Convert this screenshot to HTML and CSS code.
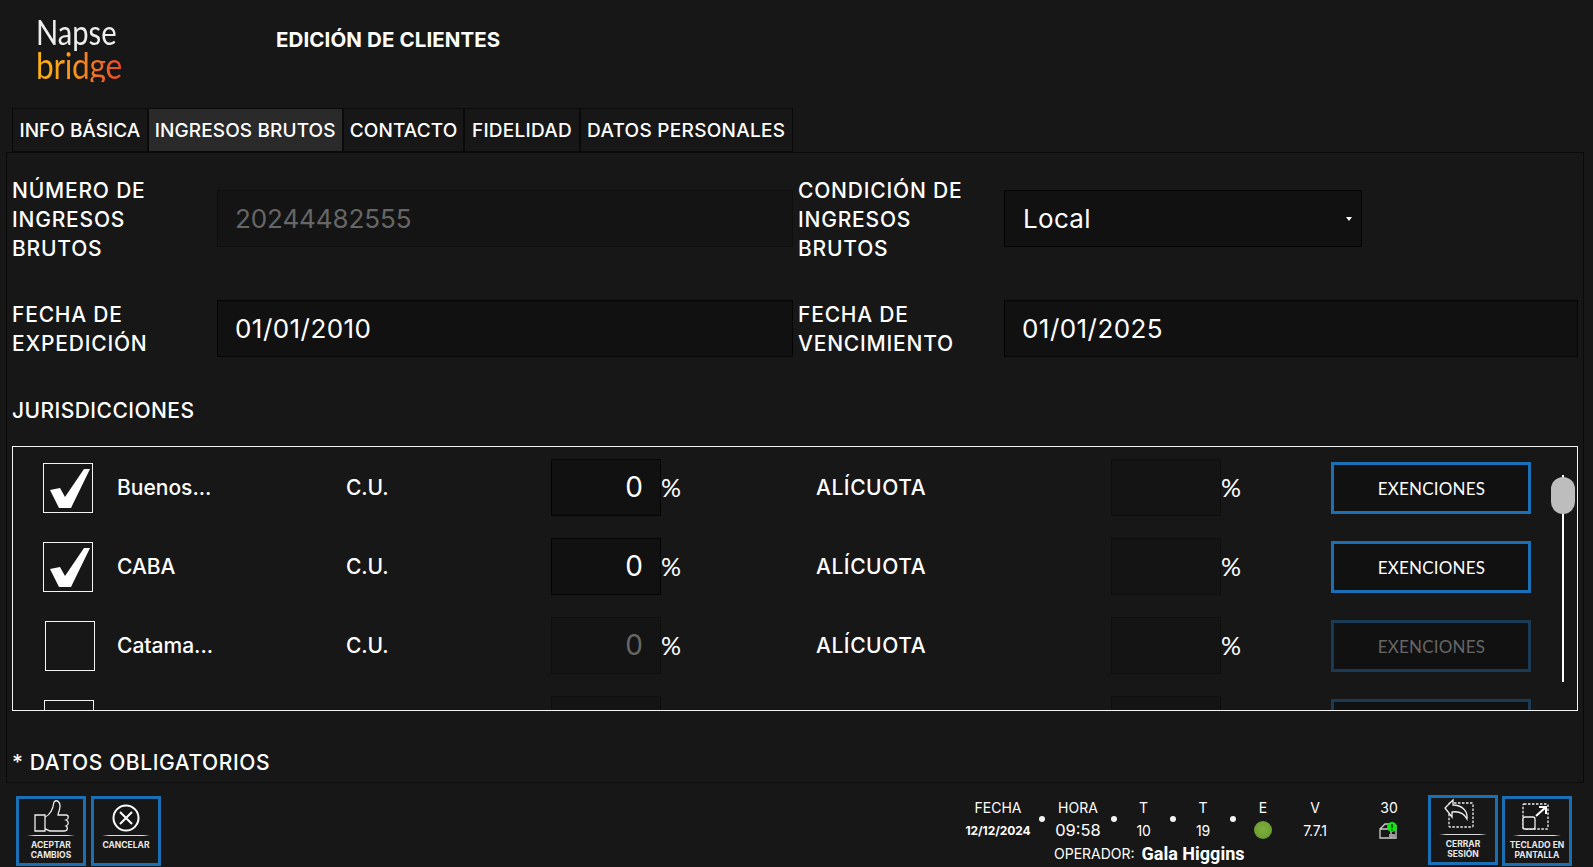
FILE: index.html
```html
<!DOCTYPE html>
<html lang="es">
<head>
<meta charset="utf-8">
<title>Edición de clientes</title>
<link rel="stylesheet" href="styles.css">
</head>
<body>
<header class="top">
  <div class="logo"><span class="logo-a">Napse</span><span class="logo-b">bridge</span></div>
  <h1 class="title">EDICIÓN DE CLIENTES</h1>
</header>
<nav class="tabs">
  <div class="tab tab-first">INFO BÁSICA</div>
  <div class="tab tab-on">INGRESOS BRUTOS</div>
  <div class="tab">CONTACTO</div>
  <div class="tab tab-wide">FIDELIDAD</div>
  <div class="tab tab-wide">DATOS PERSONALES</div>
</nav>
<main class="panel">
  <section class="form">
    <div class="lab">NÚMERO DE INGRESOS BRUTOS</div>
    <div class="field field-off">20244482555</div>
    <div class="lab lab-r">CONDICIÓN DE INGRESOS BRUTOS</div>
    <div class="field select">Local</div>
    <div class="lab">FECHA DE EXPEDICIÓN</div>
    <div class="field field-date">01/01/2010</div>
    <div class="lab lab-r">FECHA DE VENCIMIENTO</div>
    <div class="field field-date">01/01/2025</div>
  </section>
  <h2 class="head">JURISDICCIONES</h2>
  <section class="list">
    <div class="row">
      <div class="check"><svg viewBox="0 0 48 48" class="tick"><path d="M6 26 L16 24 L21 33 L40 5 L46 5 L27 44 L15 44 Z"/></svg></div>
      <div class="name">Buenos...</div><div class="cu">C.U.</div>
      <div class="num">0</div><div class="pct">%</div>
      <div class="cu alic">ALÍCUOTA</div><div class="num num-off"></div><div class="pct">%</div>
      <div class="btn">EXENCIONES</div>
    </div>
    <div class="row">
      <div class="check"><svg viewBox="0 0 48 48" class="tick"><path d="M6 26 L16 24 L21 33 L40 5 L46 5 L27 44 L15 44 Z"/></svg></div>
      <div class="name">CABA</div><div class="cu">C.U.</div>
      <div class="num">0</div><div class="pct">%</div>
      <div class="cu alic">ALÍCUOTA</div><div class="num num-off"></div><div class="pct">%</div>
      <div class="btn">EXENCIONES</div>
    </div>
    <div class="row">
      <div class="check check-2"></div>
      <div class="name">Catama...</div><div class="cu">C.U.</div>
      <div class="num num-off">0</div><div class="pct">%</div>
      <div class="cu alic">ALÍCUOTA</div><div class="num num-off"></div><div class="pct">%</div>
      <div class="btn btn-off">EXENCIONES</div>
    </div>
    <div class="row">
      <div class="check check-1"></div>
      <div class="name"></div><div class="cu"></div>
      <div class="num num-off"></div><div class="pct"></div>
      <div class="cu"></div><div class="num num-off"></div><div class="pct"></div>
      <div class="btn btn-off"></div>
    </div>
    <div class="track"><div class="thumb"></div></div>
  </section>
  <div class="head head-req">* DATOS OBLIGATORIOS</div>
</main>
<footer class="foot">
  <div class="fbtn">
    <svg class="ico" viewBox="0 0 64 36"><path d="M16 16H26V32H16Z"/><path d="M26 18C31 16 34 10 35 3C38 0 41 3 41 7C41 11 39 14 39 16H47C50 16 50 20 47 21C50 22 50 26 47 27C49 28 49 32 45 32H32C29 32 28 30 26 30"/></svg>
    <div class="rule"></div>
    <div class="flabel">ACEPTAR CAMBIOS</div>
  </div>
  <div class="fbtn">
    <svg class="ico" viewBox="0 0 64 36"><circle cx="32" cy="19" r="12.5" class="thick"/><path d="M26 13L38 25M38 13L26 25" class="thick"/></svg>
    <div class="rule"></div>
    <div class="flabel">CANCELAR</div>
  </div>
  <div class="status">
    <div class="stats">
      <div class="stat s-fecha"><span>FECHA</span><b>12/12/2024</b></div><i class="dot"></i>
      <div class="stat s-hora"><span>HORA</span><em>09:58</em></div><i class="dot"></i>
      <div class="stat s-t1"><span>T</span><small>10</small></div><i class="dot"></i>
      <div class="stat s-t2"><span>T</span><small>19</small></div><i class="dot"></i>
      <div class="stat s-e"><span>E</span><div class="led"></div></div>
      <div class="stat s-v"><span>V</span><small>7.7.1</small></div>
      <div class="stat s-n"><span>30</span>
        <svg class="box" viewBox="0 0 20 18"><path d="M1 8L6 3H13M1 8H12V17H1ZM12 8L17 5V17H12" class="box-l"/><path d="M10 13H16V16H10Z" class="box-f"/><circle cx="13" cy="6" r="5" class="box-g"/><path d="M13 3V7M13 8V9.4" class="box-m"/></svg>
      </div>
    </div>
    <div class="oper"><span>OPERADOR:</span><strong>Gala Higgins</strong></div>
  </div>
  <div class="fbtn fbtn-r">
    <svg class="ico" viewBox="0 0 64 36"><rect x="18" y="5" width="24" height="24" rx="1" class="dash"/><path class="fillbg" d="M22 2L14 10L21 19V14C28 13 33 15 36 21C37 13 31 7 22 7Z"/></svg>
    <div class="rule"></div>
    <div class="flabel">CERRAR SESIÓN</div>
  </div>
  <div class="fbtn">
    <svg class="ico" viewBox="0 0 64 36"><rect x="18" y="5" width="25" height="25" rx="1" class="dash"/><rect x="18" y="18" width="12" height="12" rx="2" class="fillbg"/><path d="M31 17L41 8M34 8H41V15" class="thick"/></svg>
    <div class="rule"></div>
    <div class="flabel">TECLADO EN PANTALLA</div>
  </div>
</footer>
</body>
</html>
```
FILE: styles.css
```css
* { box-sizing: border-box; }
html, body { margin: 0; height: 867px; overflow: hidden; }
body {
  background: #171717;
  color: #fff;
  font-family: Inter, "Open Sans", sans-serif;
  display: flex;
  flex-direction: column;
}
.top { height: 108px; display: flex; align-items: flex-start; }
.logo { width: 276px; padding: 18px 0 0 36px; display: flex; flex-direction: column; align-items: flex-start; }
.logo-a { font: 400 30px/30px Lato, sans-serif; color: #eee; transform: scale(.97, 1.14); transform-origin: left bottom; }
.logo-b {
  font: 400 33px/32px Lato, sans-serif;
  letter-spacing: -.3px;
  background: linear-gradient(90deg, #fdb414 0%, #f79421 45%, #e84a27 100%);
  -webkit-background-clip: text;
  background-clip: text;
  color: transparent;
  transform: scale(.96, 1.14);
  transform-origin: left center;
}
.title { margin: 26px 0 0; font-size: 20.5px; line-height: 28px; font-weight: 700; letter-spacing: .1px; }

.tabs { margin-left: 12px; height: 44px; display: flex; }
.tab {
  display: flex; align-items: center; justify-content: center;
  padding: 0 6px; height: 44px;
  border: 1px solid #0a0a0a;
  font-size: 19px; font-weight: 500; letter-spacing: .12px;
}
.tab-first { letter-spacing: 0; padding: 0 6.5px; }
.tab-wide { letter-spacing: .28px; padding: 0 6.5px; }
.tab-on { background: #2a2a2a; }

.panel {
  margin-left: 6px; width: 1578px; height: 631px;
  border: 1px solid #0a0a0a;
  padding: 22px 5px 0 5px;
}
.form {
  display: grid;
  grid-template-columns: 205px 576px 211px 574px;
  grid-template-rows: 87px 58px;
  row-gap: 37px;
  align-items: center;
}
.lab { font-size: 21px; line-height: 29px; font-weight: 500; width: 190px; letter-spacing: .8px; padding-top: 2px; }
.lab-r { margin-left: 5px; }
.field {
  height: 57px; background: #111; border: 1px solid #040404;
  display: flex; align-items: center; padding-left: 17px;
  font-size: 26px; font-weight: 400;
}
.field-off { background: #141414; border-color: #0e0e0e; color: #666; letter-spacing: -.1px; }
.field-date { letter-spacing: .45px; }
.select { width: 358px; padding-left: 18px; position: relative; letter-spacing: .3px; }
.select::after {
  content: ""; position: absolute; right: 9px; top: 26px;
  border: 3.5px solid transparent; border-top: 4px solid #fff; border-bottom: 0;
}

.head { margin: 39px 0 0; font-size: 21px; line-height: 29px; font-weight: 500; letter-spacing: .45px; }
.head-req { margin-top: 37px; letter-spacing: .6px; }

.list {
  margin-top: 21px; width: 1566px; height: 265px;
  border: 1px solid #f4f4f4;
  overflow: hidden; position: relative;
}
.row {
  height: 79px;
  display: grid;
  grid-template-columns: 74px 229px 205px 110px 155px 295px 110px 110px 200px;
  align-items: center;
  padding-left: 30px;
  font-size: 21px;
  font-weight: 500;
}
.check { width: 50px; height: 50px; border: 1px solid #f4f4f4; margin-top: 3px; }
.check-2 { margin-left: 2px; }
.check-1 { margin-left: 1px; }
.tick { display: block; width: 48px; height: 48px; }
.tick path { fill: #fff; }
.name, .cu { padding-top: 2px; }
.cu { letter-spacing: -.1px; }
.alic { letter-spacing: .55px; }
.num {
  height: 57px; background: #111; border: 1px solid #040404;
  display: flex; align-items: center; justify-content: flex-end;
  padding-right: 17px; font-size: 28px; font-weight: 400;
  margin-top: 1px;
}
.num-off { background: #141414; border-color: #0e0e0e; color: #666; }
.pct { font-family: Lato, sans-serif; font-size: 25px; font-weight: 400; }
.btn {
  height: 52px; background: #111; border: 3px solid #1a6fb5;
  display: flex; align-items: center; justify-content: center;
  font: 400 17px Lato, sans-serif; letter-spacing: .2px;
  margin-top: 3px; padding-left: 1px;
}
.btn-off { border-color: #1a3a55; color: #666; }
.track { position: absolute; left: 1549px; top: 28px; width: 2px; height: 207px; background: #fff; }
.thumb {
  position: absolute; left: -11px; top: 2px; width: 24px; height: 37px;
  border-radius: 12px; background: #bdbdbd;
}

.foot { flex: 1; display: flex; align-items: flex-start; padding: 13px 21px 0 16px; gap: 5px; }
.fbtn {
  width: 70px; height: 70px; border: 3px solid #1a6fb5; flex: none;
  display: flex; flex-direction: column; align-items: center;
}
.fbtn-r { margin-top: -1px; margin-right: -1px; }
.ico { display: block; width: 64px; height: 36px; flex: none; }
.ico path, .ico circle, .ico rect { fill: none; stroke: #eee; stroke-width: 1.3; }
.ico .thick { stroke-width: 2; stroke: #fff; }
.ico .dash { stroke-dasharray: 2.5 1.5; }
.ico .fillbg { fill: #171717; }
.rule { width: 48px; height: 1px; background: linear-gradient(90deg, transparent, #ddd 15%, #ddd 85%, transparent); flex: none; }
.flabel { margin-top: 4px; width: 64px; text-align: center; font-size: 8.5px; line-height: 10px; font-weight: 700; color: #e8e8e8; }

.status { margin-left: auto; margin-right: 9px; width: 457px; }
.stats { display: flex; height: 46px; }
.stat { display: flex; flex-direction: column; align-items: center; font-size: 14px; font-weight: 400; flex: none; }
.stat span { line-height: 23px; height: 23px; }
.stat b { line-height: 23px; font-size: 12px; font-weight: 700; letter-spacing: -.1px; }
.stat em { font-style: normal; line-height: 23px; font-size: 16.5px; }
.stat small { line-height: 23px; font-size: 14px; letter-spacing: -.2px; }
.s-fecha { width: 82px; }
.s-hora { width: 66px; }
.s-t1 { width: 53px; }
.s-t2 { width: 54px; }
.s-e { width: 54px; }
.s-v { width: 50px; }
.s-n { width: 50px; margin-left: 24px; }
.dot { flex: none; width: 6px; height: 6px; align-self: center; border-radius: 50%; background: #f4f4f4; }
.led {
  width: 18px; height: 18px; border-radius: 50%; margin-top: 2px;
  background: radial-gradient(circle at 50% 45%, #7fb03c 0%, #6fa035 60%, #557f27 100%);
}
.box { width: 20px; height: 18px; margin-top: 2px; }
.box-l { fill: none; stroke: #ccc; stroke-width: 1.3; }
.box-f { fill: #999; }
.box-g { fill: #16e316; }
.box-m { stroke: #10420f; stroke-width: 1.6; fill: none; }
.oper { padding-left: 97px; height: 22px; display: flex; align-items: center; gap: 7px; font-size: 14px; }
.oper strong { font: 700 18px Roboto, sans-serif; }
```
